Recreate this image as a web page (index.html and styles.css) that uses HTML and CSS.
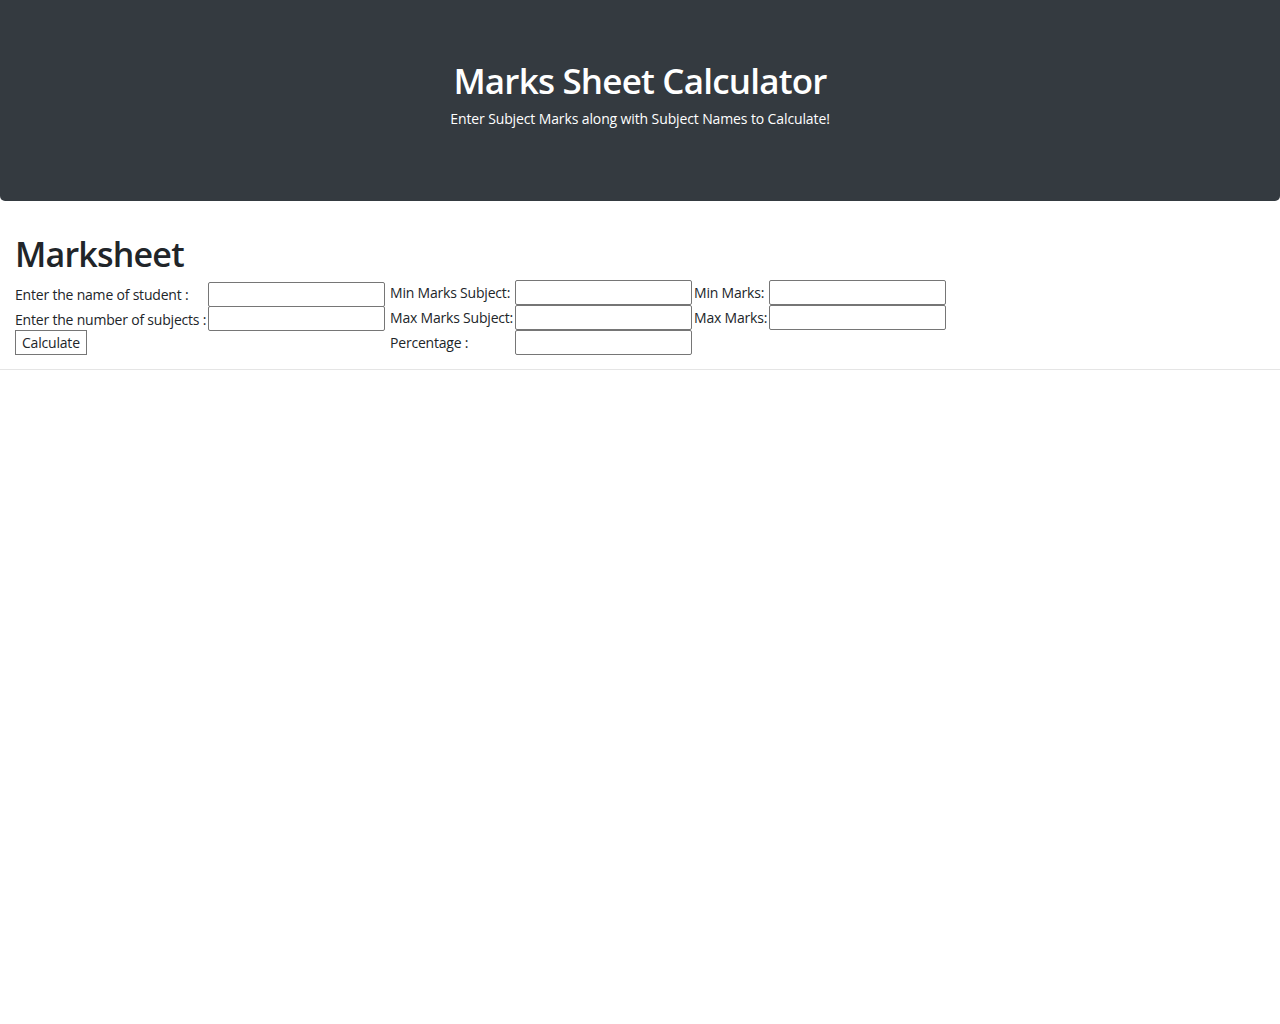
FILE: index.html
```html
<!DOCTYPE html>
<html>
<head>
<meta charset="utf-8">
<link rel="stylesheet" href="styles.css">
</head>
<body>
<header class="jumbo">
  <h1 class="jumbo-title">Marks Sheet Calculator</h1>
  <p class="jumbo-sub">Enter Subject Marks along with Subject Names to Calculate!</p>
</header>
<main class="container">
  <h2 class="sheet-title">Marksheet</h2>
  <div class="forms">
    <table class="form-table left">
      <tr><td class="lbl">Enter the name of student :</td><td><input type="text" class="inp"></td></tr>
      <tr><td class="lbl">Enter the number of subjects :</td><td><input type="text" class="inp overlap"></td></tr>
      <tr><td><button class="btn">Calculate</button></td><td></td></tr>
    </table>
    <table class="form-table right">
      <tr><td class="lbl c1">Min Marks Subject:</td><td><input type="text" class="inp"></td><td class="lbl c3">Min Marks:</td><td><input type="text" class="inp"></td></tr>
      <tr><td class="lbl c1">Max Marks Subject:</td><td><input type="text" class="inp"></td><td class="lbl c3">Max Marks:</td><td><input type="text" class="inp"></td></tr>
      <tr><td class="lbl c1">Percentage :</td><td><input type="text" class="inp"></td><td></td><td></td></tr>
    </table>
  </div>
</main>
<hr class="rule">
</body>
</html>
```

FILE: styles.css
```css
html, body {
  margin: 0;
  padding: 0;
}
body {
  font-family: "Open Sans", "Noto Sans", sans-serif;
  color: #212529;
  background: #fff;
}
.jumbo {
  background: #343a40;
  color: #fff;
  border-radius: 0 0 5px 5px;
  height: 201px;
  box-sizing: border-box;
  padding-top: 58px;
  text-align: center;
}
.jumbo-title {
  margin: 0;
  font-size: 35px;
  font-weight: 600;
  line-height: 46px;
  letter-spacing: -0.8px;
}
.jumbo-sub {
  margin: 5px 0 0;
  font-size: 14px;
  line-height: 20px;
  letter-spacing: -0.12px;
}
.container {
  padding: 0 15px;
}
.sheet-title {
  margin: 32px 0 5px;
  font-size: 34px;
  font-weight: 600;
  line-height: 42px;
  letter-spacing: -0.8px;
}
.forms {
  display: flex;
  align-items: flex-start;
}
.form-table {
  border-collapse: collapse;
  font-size: 14px;
}
.form-table td {
  padding: 0;
  height: 24px;
  vertical-align: middle;
}
.form-table.left { margin-top: 2px; }
.form-table.right td { height: 25px; }
.form-table.left .lbl { width: 193px; }
.form-table.right { margin-left: 5px; }
.form-table.right .c1 { width: 125px; }
.form-table.right .c3 { width: 75px; padding-left: 2px; }
.lbl {
  white-space: nowrap;
  letter-spacing: -0.2px;
}
.inp {
  display: block;
  width: 177px;
  height: 25px;
  box-sizing: border-box;
  border: 1px solid #767676;
  border-radius: 2px;
  margin: 0;
  padding: 0 2px;
  font: inherit;
}
.inp.overlap {
  margin-top: -1px;
}
.btn {
  font: inherit;
  font-size: 14px;
  letter-spacing: -0.2px;
  background: #fff;
  color: #212529;
  border: 1px solid #767676;
  border-radius: 0;
  height: 25px;
  padding: 0 6px;
  margin: -1px 0 0;
  display: block;
}
.rule {
  margin: 14px 0 0;
  border: 0;
  border-top: 1px solid rgba(0,0,0,0.1);
}
```
